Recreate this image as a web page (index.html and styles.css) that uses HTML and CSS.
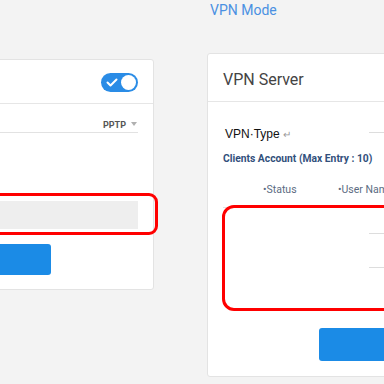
FILE: index.html
```html
<!DOCTYPE html>
<html lang="en">

<head>
    <meta charset="UTF-8">
    <meta name="viewport" content="width=device-width, initial-scale=1.0">
    <title>VPN Mode</title>
    <link rel="stylesheet" href="styles.css">
</head>

<body>
    <div class="mode-title">VPN Mode</div>

    <div class="panels">
        <!-- VPN client card, mostly off the left edge -->
        <div class="card card-client">
            <div class="card-head">
                <span class="switch">
                    <svg class="switch-check" width="12" height="9" viewBox="0 0 12 9">
                        <path d="M1.5 4.5 L4.5 7.5 L10.5 1.5" fill="none" stroke="#fff" stroke-width="2" stroke-linecap="round" stroke-linejoin="round"/>
                    </svg>
                    <span class="switch-knob"></span>
                </span>
            </div>
            <div class="card-body">
                <div class="select-row">
                    <span class="select-value">PPTP</span>
                    <span class="caret"></span>
                </div>
                <div class="field-wrap">
                    <div class="field"></div>
                    <div class="mark mark-field"></div>
                </div>
                <div class="btn btn-client"></div>
            </div>
        </div>

        <!-- VPN server card -->
        <div class="card card-server">
            <div class="card-head server-head">VPN Server</div>
            <div class="card-body server-body">
                <div class="type-row">
                    <span class="type-label">VPN·Type <span class="para">↵</span></span>
                    <span class="type-input"></span>
                </div>
                <div class="clients-title">Clients Account (Max Entry : 10)</div>
                <div class="table-head">
                    <span class="col col-status">•Status</span>
                    <span class="col col-user">•User Name</span>
                </div>
                <div class="rows-wrap">
                    <div class="table-row"><span class="row-input"></span></div>
                    <div class="table-row"><span class="row-input"></span></div>
                    <div class="mark mark-rows"></div>
                </div>
                <div class="btn btn-server"></div>
            </div>
        </div>
    </div>
</body>

</html>
```

FILE: styles.css
```css
html,
body {
    overflow: hidden;
}

body {
    margin: 0;
    width: 384px;
    height: 384px;
    background-color: #f3f3f3;
    font-family: Roboto, 'Liberation Sans', sans-serif;
    color: #444;
}

.mode-title {
    padding-top: 2px;
    margin-left: 210px;
    margin-bottom: 35px;
    font-size: 14px;
    line-height: 16px;
    color: #4a90e2;
}

.panels {
    display: flex;
    align-items: flex-start;
    gap: 53px;
    margin-left: -146px;
}

.card {
    flex-shrink: 0;
    background-color: #ffffff;
    border: 1px solid #e3e3e3;
    border-radius: 3px;
    box-sizing: border-box;
}

.card-head {
    display: flex;
    align-items: center;
    box-sizing: border-box;
    border-bottom: 1px solid #e6e6e6;
}

/* left card */

.card-client {
    width: 300px;
    margin-top: 6px;
}

.card-client .card-head {
    height: 44px;
    justify-content: flex-end;
    padding: 1px 15px 0 0;
}

.switch {
    position: relative;
    display: flex;
    align-items: center;
    width: 37px;
    height: 19px;
    border-radius: 10px;
    background-color: #2a8ce6;
}

.switch-check {
    margin-left: 5px;
}

.switch-knob {
    position: absolute;
    right: 2px;
    top: 2px;
    width: 15px;
    height: 15px;
    border-radius: 50%;
    background-color: #ffffff;
}

.card-client .card-body {
    padding: 0 15px 14px 15px;
}

.select-row {
    display: flex;
    align-items: flex-end;
    justify-content: flex-end;
    box-sizing: border-box;
    height: 29px;
    padding-bottom: 2px;
    border-bottom: 1px solid #e2e2e2;
}

.select-value {
    font-size: 9px;
    line-height: 10px;
    font-weight: bold;
    color: #555;
}

.caret {
    width: 0;
    height: 0;
    margin: 0 1px 4px 5px;
    border-left: 3.5px solid transparent;
    border-right: 3.5px solid transparent;
    border-top: 4px solid #b0b0b0;
}

.field-wrap {
    position: relative;
    margin-top: 68px;
}

.field {
    height: 28px;
    background-color: #eeeeee;
}

.mark {
    position: absolute;
    border: 3px solid #ff0000;
}

.mark-field {
    top: -8px;
    bottom: -6px;
    left: -20px;
    right: -20px;
    border-radius: 9px;
}

.btn {
    height: 31px;
    border-radius: 3px;
    background-color: #1b8be6;
}

.btn-client {
    width: 181px;
    margin-top: 15px;
}

/* right card */

.card-server {
    width: 240px;
}

.server-head {
    height: 48px;
    padding: 3px 15px 0 15px;
    font-size: 16px;
    color: #444;
}

.server-body {
    padding: 0 0 15px 15px;
}

.type-row {
    display: flex;
    align-items: flex-start;
    height: 20px;
    margin-top: 22px;
}

.type-label {
    width: 144px;
    padding-left: 2px;
    font-family: 'Liberation Sans', Arial, sans-serif;
    font-size: 12px;
    line-height: 20px;
    color: #111;
}

.para {
    color: #999;
    font-size: 10px;
}

.type-input {
    flex: 1;
    height: 8px;
    border-bottom: 1px solid #dddddd;
}

.clients-title {
    margin-top: 9px;
    font-size: 10.3px;
    line-height: 12px;
    font-weight: bold;
    color: #32507c;
    white-space: nowrap;
}

.table-head {
    display: flex;
    align-items: flex-end;
    box-sizing: border-box;
    height: 43px;
    padding-bottom: 11px;
    border-bottom: 1px solid #e2e2e2;
    font-size: 10.5px;
    line-height: 12px;
    color: #5b6b82;
    white-space: nowrap;
}

.col-status {
    width: 75px;
    margin-left: 40px;
}

.rows-wrap {
    position: relative;
    padding-bottom: 35px;
}

.table-row {
    display: flex;
    height: 34px;
}

.row-input {
    width: 60px;
    height: 16px;
    margin: 9px 0 0 146px;
    border-bottom: 1px solid #dddddd;
}

.mark-rows {
    top: -3px;
    bottom: 0;
    left: -1px;
    right: -30px;
    border-radius: 12px;
}

.btn-server {
    height: 33px;
    margin: 17px 0 0 96px;
}
```
